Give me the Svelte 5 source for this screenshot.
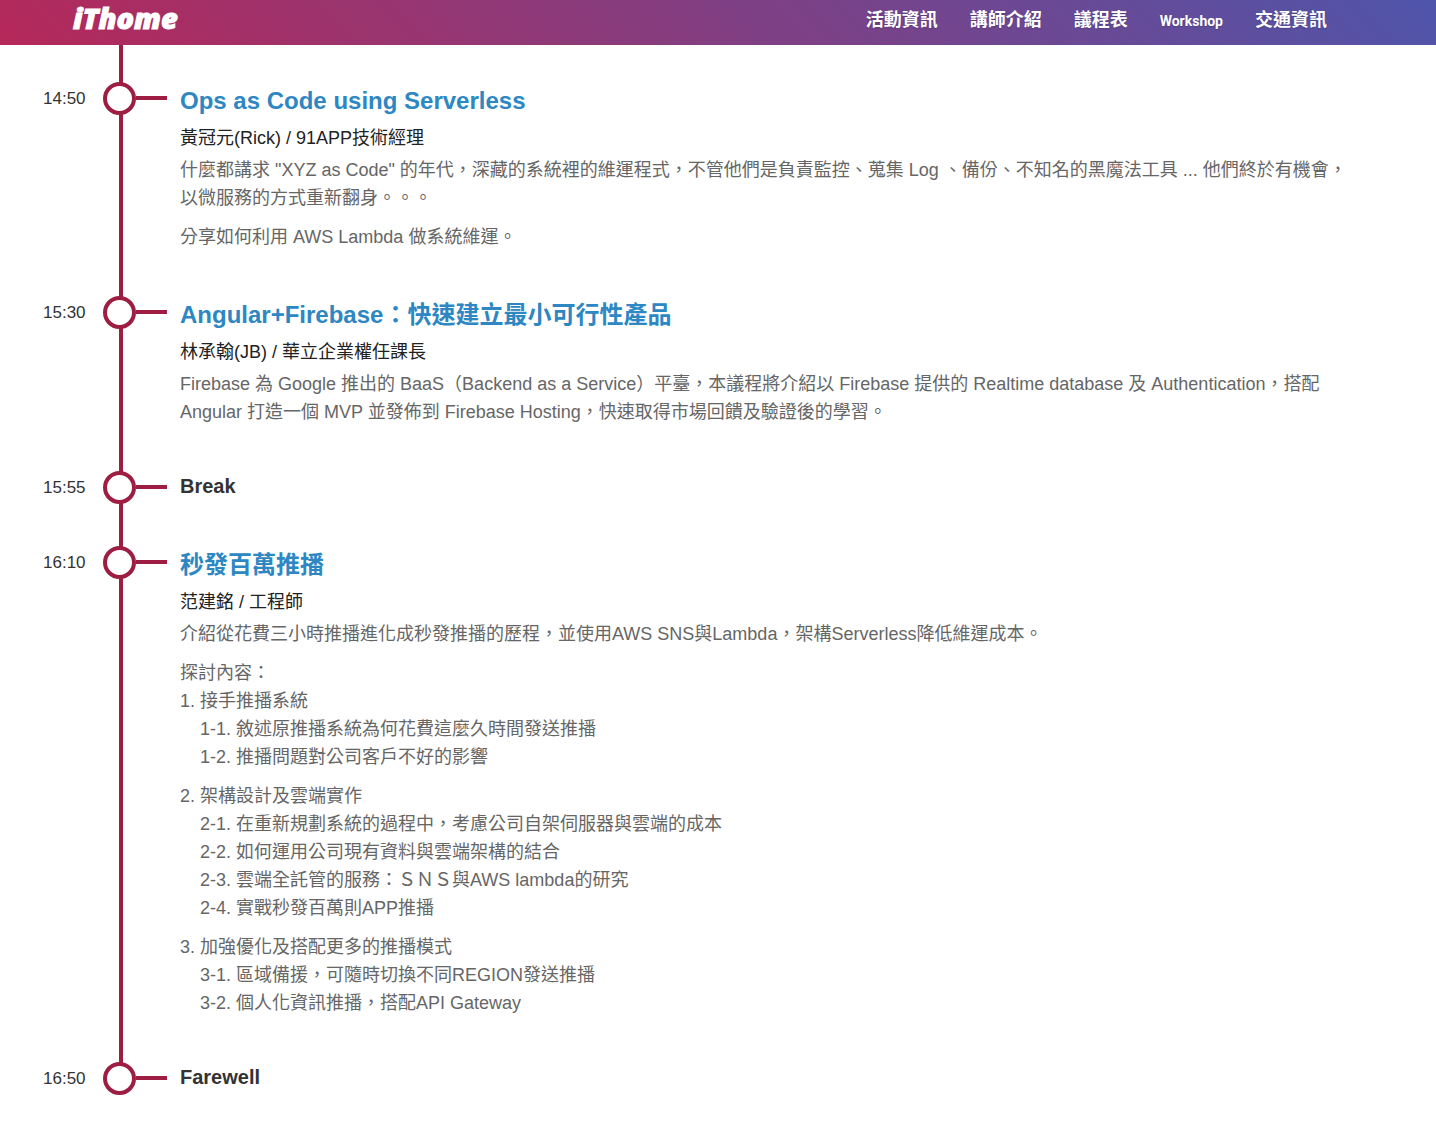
<script>
  const links = ['活動資訊', '講師介紹', '議程表', 'Workshop', '交通資訊'];

  const sessions = [
    {
      time: '14:50',
      title: 'Ops as Code using Serverless',
      speaker: '黃冠元(Rick) / 91APP技術經理',
      blocks: [
        {
          text: '什麼都講求 "XYZ as Code" 的年代，深藏的系統裡的維運程式，不管他們是負責監控、蒐集 Log 、備份、不知名的黑魔法工具 ... 他們終於有機會，以微服務的方式重新翻身。。。',
        },
        { text: '分享如何利用 AWS Lambda 做系統維運。' },
      ],
    },
    {
      time: '15:30',
      title: 'Angular+Firebase：快速建立最小可行性產品',
      speaker: '林承翰(JB) / 華立企業權任課長',
      blocks: [
        {
          text: 'Firebase 為 Google 推出的 BaaS（Backend as a Service）平臺，本議程將介紹以 Firebase 提供的 Realtime database 及 Authentication，搭配 Angular 打造一個 MVP 並發佈到 Firebase Hosting，快速取得市場回饋及驗證後的學習。',
        },
      ],
    },
    { time: '15:55', title: 'Break' },
    {
      time: '16:10',
      title: '秒發百萬推播',
      speaker: '范建銘 / 工程師',
      blocks: [
        { text: '介紹從花費三小時推播進化成秒發推播的歷程，並使用AWS SNS與Lambda，架構Serverless降低維運成本。' },
        {
          lead: '探討內容：',
          text: '1. 接手推播系統',
          items: ['1-1. 敘述原推播系統為何花費這麼久時間發送推播', '1-2. 推播問題對公司客戶不好的影響'],
        },
        {
          text: '2. 架構設計及雲端實作',
          items: [
            '2-1. 在重新規劃系統的過程中，考慮公司自架伺服器與雲端的成本',
            '2-2. 如何運用公司現有資料與雲端架構的結合',
            '2-3. 雲端全託管的服務：ＳＮＳ與AWS lambda的研究',
            '2-4. 實戰秒發百萬則APP推播',
          ],
        },
        {
          text: '3. 加強優化及搭配更多的推播模式',
          items: ['3-1. 區域備援，可隨時切換不同REGION發送推播', '3-2. 個人化資訊推播，搭配API Gateway'],
        },
      ],
    },
    { time: '16:50', title: 'Farewell' },
  ];
</script>

<div class="page" lang="zh-Hant">
  <header>
    <a class="logo" href="#top">iThome</a>
    <nav>
      {#each links as link}
        <a class:latin={link === 'Workshop'} href="#{link}">{link}</a>
      {/each}
    </nav>
  </header>

  <main>
    {#each sessions as session}
      <article>
        <time>{session.time}</time>
        <div class="rail">
          <span class="ring"></span>
          <span class="tick"></span>
        </div>
        <div class="content">
          {#if session.speaker}
            <h2><a href="#{session.time}">{session.title}</a></h2>
            <p class="speaker">{session.speaker}</p>
          {:else}
            <h3>{session.title}</h3>
          {/if}
          {#if session.blocks}
            <div class="blocks">
              {#each session.blocks as block}
                <div>
                  {#if block.lead}<p>{block.lead}</p>{/if}
                  <p>{block.text}</p>
                  {#if block.items}
                    <ul>
                      {#each block.items as item}
                        <li>{item}</li>
                      {/each}
                    </ul>
                  {/if}
                </div>
              {/each}
            </div>
          {/if}
        </div>
      </article>
    {/each}
  </main>
</div>

<style>
  :global(body) {
    margin: 0;
    background: #fff;
  }

  .page {
    font: 18px/28px 'Liberation Sans', 'Noto Sans CJK TC', sans-serif;
    color: #666;
  }

  h2,
  h3,
  p,
  ul {
    margin: 0;
    padding: 0;
  }

  a {
    color: inherit;
    text-decoration: none;
  }

  header {
    display: flex;
    align-items: flex-start;
    justify-content: space-between;
    height: 45px;
    box-sizing: border-box;
    padding: 0 109px 0 73px;
    background: linear-gradient(45deg, #b52859, #4f55ab);
    color: #fff;
  }

  .logo {
    font: italic 800 29px/36px 'Open Sans', sans-serif;
    -webkit-text-stroke: 1px #fff;
  }

  nav {
    display: flex;
    align-items: baseline;
    gap: 32px;
    font: bold 18px/36px 'Noto Sans CJK TC', sans-serif;
    text-shadow: 0 1px 2px rgba(0, 0, 0, 0.2);
  }

  .latin {
    font-family: Roboto, sans-serif;
    font-size: 14px;
  }

  main {
    padding: 0 74px 0 43px;
  }

  article {
    display: grid;
    grid-template-columns: 60px 64px 1fr;
  }

  time {
    padding-top: 3px;
    font: 17px/28px 'Liberation Sans', sans-serif;
    color: #333;
  }

  /* The vertical line runs behind each ring and on to the next session. */
  .rail {
    display: flex;
    align-items: flex-start;
    background: linear-gradient(#9d1e42, #9d1e42) 16px 0 / 4px 100% no-repeat;
  }

  article:first-child time {
    padding-top: 40px;
  }

  article:first-child .content {
    padding-top: 39px;
  }

  article:first-child .rail {
    padding-top: 37px;
  }

  article:last-child .rail {
    background-size: 4px 16px;
  }

  .ring {
    width: 33px;
    height: 33px;
    box-sizing: border-box;
    border: 4px solid #9d1e42;
    border-radius: 50%;
    background: #fff;
  }

  .tick {
    flex: 1;
    height: 4px;
    margin-top: 14px;
    background: #9d1e42;
  }

  .content {
    padding: 2px 0 45px 13px;
  }

  h2 {
    margin-bottom: 6px;
    font-size: 24px;
    line-height: 34px;
    color: #2d87c3;
  }

  h3 {
    margin-bottom: 2px;
    font-size: 20px;
    line-height: 26px;
    color: #333;
  }

  .speaker {
    margin-bottom: 4px;
    color: #222;
  }

  .blocks {
    display: grid;
    gap: 11px;
  }

  ul {
    padding-left: 20px;
    list-style: none;
  }
</style>
